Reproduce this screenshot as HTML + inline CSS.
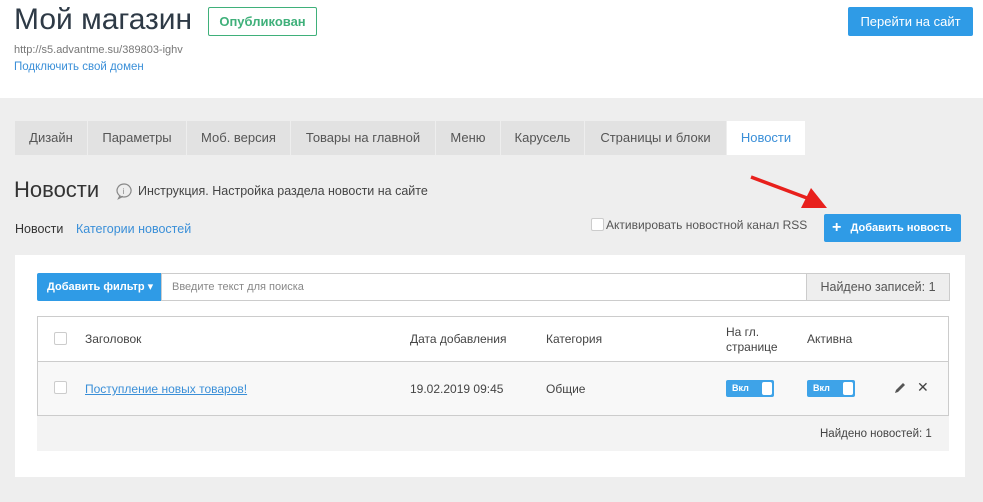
<!DOCTYPE html>
<html><head><meta charset="utf-8"><style>
*{box-sizing:border-box;margin:0;padding:0}
body{width:983px;height:502px;overflow:hidden;background:#eeeeee;font-family:"Liberation Sans","DejaVu Sans",sans-serif;color:#333;position:relative}
.abs{position:absolute}
.hdr{left:0;top:0;width:983px;height:98px;background:#fff}
.tab{position:absolute;top:121px;height:34px;background:#e2e2e2;color:#555;font-size:13px;line-height:34px;text-align:center}
.cb{position:absolute;width:13px;height:13px;border:1px solid #ccc;border-radius:2px;background:#fff}
.tog{position:absolute;width:48px;height:17px;background:#3ea3e8;border-radius:2px;color:#fff;font-size:9px;font-weight:bold;line-height:17px;padding-left:6px}
.tog:after{content:"";position:absolute;right:2px;top:2px;width:10px;height:13px;background:#fff;border-radius:2px}
.th{position:absolute;font-size:12px;color:#444}
</style></head><body>
<div class="abs hdr"></div>
<div class="abs" style="left:14px;top:3px;font-size:30px;color:#2e3a46">Мой магазин</div>
<div class="abs" style="left:208px;top:7px;width:109px;height:29px;border:1px solid #3fb07a;border-radius:2px;color:#3fb07a;font-size:13px;font-weight:bold;line-height:27px;text-align:center">Опубликован</div>
<div class="abs" style="left:848px;top:7px;width:125px;height:29px;background:#2f9be6;border-radius:2px;color:#fff;font-size:13px;line-height:29px;text-align:center">Перейти на сайт</div>
<div class="abs" style="left:14px;top:44px;font-size:11px;color:#777">http://s5.advantme.su/389803-ighv</div>
<div class="abs" style="left:14px;top:61px;font-size:11.5px;color:#3a8fd8">Подключить свой домен</div>

<div class="tab" style="left:15px;width:72px">Дизайн</div>
<div class="tab" style="left:88px;width:98px">Параметры</div>
<div class="tab" style="left:187px;width:103px">Моб. версия</div>
<div class="tab" style="left:291px;width:144px">Товары на главной</div>
<div class="tab" style="left:436px;width:64px">Меню</div>
<div class="tab" style="left:501px;width:83px">Карусель</div>
<div class="tab" style="left:585px;width:141px">Страницы и блоки</div>
<div class="tab" style="left:727px;width:78px;background:#fff;color:#3a8fd8">Новости</div>

<div class="abs" style="left:14px;top:177px;font-size:22px;color:#333">Новости</div>
<svg class="abs" style="left:115px;top:182px" width="18" height="18" viewBox="0 0 18 18"><path d="M9 2a7 6.5 0 1 0 0.1 0zM5 13.5 3.5 16.5 8 14.3" fill="none" stroke="#888" stroke-width="1.2"/><text x="7.6" y="12" font-size="8" fill="#888" font-family="Liberation Sans">i</text></svg>
<div class="abs" style="left:138px;top:184px;font-size:12.5px;color:#444">Инструкция. Настройка раздела новости на сайте</div>
<div class="abs" style="left:15px;top:222px;font-size:12.5px;color:#333">Новости</div>
<div class="abs" style="left:76px;top:222px;font-size:12.5px;color:#3a8fd8">Категории новостей</div>

<div class="cb" style="left:591px;top:218px"></div>
<div class="abs" style="left:606px;top:218px;font-size:12px;color:#555">Активировать новостной канал RSS</div>
<div class="abs" style="left:824px;top:214px;width:137px;height:28px;background:#2f9be6;border-radius:2px;color:#fff;font-size:11px;font-weight:bold;line-height:28px;padding-left:8px"><span style="font-size:16px;vertical-align:-1px">+</span>&nbsp;&nbsp; Добавить новость</div>
<svg class="abs" style="left:745px;top:170px" width="85" height="45"><line x1="6" y1="7" x2="62" y2="28" stroke="#e8201c" stroke-width="3.5"/><polygon points="82,38 56,38 66,18" fill="#e8201c"/></svg>

<div class="abs" style="left:15px;top:255px;width:950px;height:222px;background:#fff"></div>
<div class="abs" style="left:37px;top:273px;width:124px;height:28px;background:#2f9be6;border-radius:2px 0 0 2px;color:#fff;font-size:11px;font-weight:bold;line-height:28px;padding-left:10px">Добавить фильтр ▾</div>
<div class="abs" style="left:161px;top:273px;width:646px;height:28px;border:1px solid #ccc;font-size:11px;color:#888;line-height:26px;padding-left:10px">Введите текст для поиска</div>
<div class="abs" style="left:806px;top:273px;width:144px;height:28px;border:1px solid #ccc;background:#eee;font-size:12.5px;color:#555;line-height:26px;text-align:center">Найдено записей: 1</div>

<div class="abs" style="left:37px;top:316px;width:912px;height:100px;border:1px solid #ccc;background:#fff"></div>
<div class="abs" style="left:38px;top:361px;width:910px;height:54px;background:#f8f8f8;border-top:1px solid #ccc"></div>
<div class="cb" style="left:54px;top:332px"></div>
<div class="th" style="left:85px;top:332px">Заголовок</div>
<div class="th" style="left:410px;top:332px">Дата добавления</div>
<div class="th" style="left:546px;top:332px">Категория</div>
<div class="th" style="left:726px;top:325px;line-height:15px">На гл.<br>странице</div>
<div class="th" style="left:807px;top:332px">Активна</div>
<div class="cb" style="left:54px;top:381px"></div>
<div class="th" style="left:85px;top:382px;color:#3a8fd8;text-decoration:underline">Поступление новых товаров!</div>
<div class="th" style="left:410px;top:382px">19.02.2019 09:45</div>
<div class="th" style="left:546px;top:382px">Общие</div>
<div class="tog" style="left:726px;top:380px">Вкл</div>
<div class="tog" style="left:807px;top:380px">Вкл</div>
<svg class="abs" style="left:893px;top:381px" width="14" height="14"><path d="M2 12 3 9 10 2 12 4 5 11Z" fill="#555"/></svg>
<div class="abs" style="left:917px;top:379px;font-size:14px;font-weight:bold;color:#444">✕</div>
<div class="abs" style="left:37px;top:416px;width:912px;height:35px;background:#f3f3f3"></div>
<div class="abs" style="left:820px;top:428px;font-size:11.5px;color:#444">Найдено новостей: 1</div>
</body></html>
